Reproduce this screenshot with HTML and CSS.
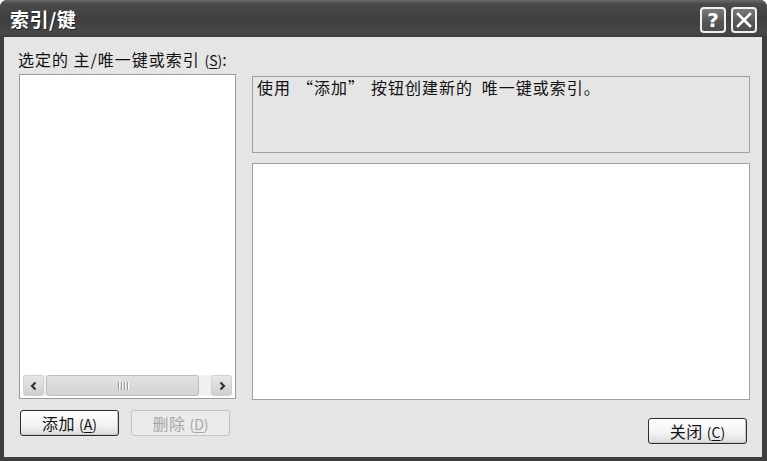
FILE: index.html
```html
<!DOCTYPE html>
<html lang="zh">
<head>
<meta charset="utf-8">
<link rel="stylesheet" href="styles.css">
</head>
<body>
<div class="window">
  <div class="titlebar">
    <div class="title">索引/键</div>
    <div class="tbtns">
      <div class="tbtn help">?</div>
      <div class="tbtn close">
        <svg width="16" height="16" viewBox="0 0 16 16"><path d="M2 2 L14 14 M14 2 L2 14" stroke="#fff" stroke-width="2.6" stroke-linecap="square"/></svg>
      </div>
    </div>
  </div>
  <div class="client">
    <div class="label">选定的 主/唯一键或索引 <span class="mn">(<u>S</u>)</span>:</div>
    <div class="main">
      <div class="leftcol">
        <div class="listbox">
          <div class="listarea"></div>
          <div class="hscroll">
            <div class="arrow"><svg width="10" height="10" viewBox="0 0 10 10"><path d="M6.5 1.5 L3 5 L6.5 8.5" fill="none" stroke="#333" stroke-width="2.2"/></svg></div>
            <div class="thumb"><div class="grip"><i></i><i></i><i></i><i></i></div></div>
            <div class="track"></div>
            <div class="arrow"><svg width="10" height="10" viewBox="0 0 10 10"><path d="M3.5 1.5 L7 5 L3.5 8.5" fill="none" stroke="#333" stroke-width="2.2"/></svg></div>
          </div>
        </div>
        <div class="btnrow">
          <div class="btn"><span>添加 <span class="mn">(<u>A</u>)</span></span></div>
          <div class="btn disabled"><span>删除 <span class="mn">(<u>D</u>)</span></span></div>
        </div>
      </div>
      <div class="rightcol">
        <div class="desc">使用<span class="ql">“</span>添加<span class="qr">”</span>按钮创建新的 唯一键或索引。</div>
        <div class="props"></div>
        <div class="btn closebtn"><span>关闭 <span class="mn">(<u>C</u>)</span></span></div>
      </div>
    </div>
  </div>
</div>
</body>
</html>
```
FILE: styles.css
```css
html, body {
  margin: 0;
  padding: 0;
  background: #ffffff;
}
body {
  width: 767px;
  height: 461px;
  overflow: hidden;
  font-family: "Noto Sans CJK SC", "DejaVu Sans", sans-serif;
}
.window {
  width: 767px;
  height: 461px;
  box-sizing: border-box;
  display: flex;
  flex-direction: column;
  background: #3e3e3e;
  border-radius: 7px 7px 0 0;
  overflow: hidden;
}
.titlebar {
  height: 37px;
  flex: none;
  display: flex;
  align-items: center;
  justify-content: space-between;
  padding: 0 10px 0 10px;
  background: linear-gradient(#6a6a6a 0px, #4a4a4a 4px, #3f3f3f 18px, #474747 34px, #3a3a3a 37px);
}
.title {
  color: #ffffff;
  font-weight: bold;
  font-size: 19px;
  line-height: 22px;
  text-shadow: 1px 1px 0 #222;
  letter-spacing: 0.5px;
}
.tbtns {
  display: flex;
  gap: 5px;
  margin-top: 3px;
}
.tbtn {
  width: 26px;
  height: 26px;
  box-sizing: border-box;
  border: 2px solid #f0f0f0;
  border-radius: 4px;
  background: linear-gradient(#7a7a7a, #555555 60%, #4d4d4d);
  display: flex;
  align-items: center;
  justify-content: center;
  color: #fff;
}
.help {
  font-family: "DejaVu Sans", sans-serif;
  font-weight: bold;
  font-size: 20px;
  line-height: 22px;
}
.client {
  flex: 1;
  margin: 0 5px 4px 4px;
  background: #e5e5e5;
  padding: 12px 0 0 14px;
  display: flex;
  flex-direction: column;
}
.label {
  font-size: 16px;
  line-height: 20px;
  letter-spacing: 1px;
  color: #111;
  height: 20px;
  margin-bottom: 5px;
}
.mn {
  font-size: 14px;
  letter-spacing: 0;
}
u {
  text-decoration: underline;
  text-underline-offset: 2px;
}
.main {
  display: flex;
  gap: 16px;
  margin-left: 1px;
}
.leftcol {
  width: 217px;
  display: flex;
  flex-direction: column;
}
.listbox {
  height: 325px;
  box-sizing: border-box;
  border: 1px solid #9a9a9a;
  background: #ffffff;
  display: flex;
  flex-direction: column;
  padding: 0 3px 2px 3px;
}
.listarea {
  flex: 1;
}
.hscroll {
  height: 21px;
  display: flex;
  align-items: stretch;
  gap: 2px;
  background: #f0f0f0;
  border-radius: 2px;
}
.arrow {
  width: 21px;
  box-sizing: border-box;
  border: 1px solid #d0d0d0;
  border-radius: 3px;
  background: linear-gradient(#e8e8e8, #cfcfcf);
  display: flex;
  align-items: center;
  justify-content: center;
}
.thumb {
  width: 153px;
  box-sizing: border-box;
  border: 1px solid #bdbdbd;
  border-radius: 3px;
  background: linear-gradient(#e2e2e2, #d3d3d3);
  display: flex;
  align-items: center;
  justify-content: center;
}
.grip {
  display: flex;
  gap: 2px;
}
.grip i {
  width: 1px;
  height: 8px;
  background: #9a9a9a;
  box-shadow: 1px 0 0 #fafafa;
}
.track {
  flex: 1;
}
.btnrow {
  display: flex;
  gap: 12px;
  margin-top: 11px;
  padding-left: 1px;
}
.btn {
  width: 99px;
  height: 26px;
  box-sizing: border-box;
  border: 1px solid #2e2e2e;
  border-radius: 3px;
  background: linear-gradient(#ffffff, #f2f2f2 60%, #dcdcdc);
  box-shadow: inset -1px -1px 0 #c8c8c8;
  display: flex;
  align-items: center;
  justify-content: center;
  font-size: 16px;
  line-height: 18px;
  letter-spacing: 0.5px;
  color: #111;
}
.btn.disabled {
  border-color: #c4c4c4;
  background: #ebebeb;
  box-shadow: none;
  color: #a6a6a6;
}
.rightcol {
  width: 498px;
  display: flex;
  flex-direction: column;
  padding-top: 2px;
}
.desc {
  height: 77px;
  box-sizing: border-box;
  border: 1px solid #a0a0a0;
  background: #e5e5e5;
  font-size: 16px;
  line-height: 20px;
  letter-spacing: 1px;
  word-spacing: 4px;
  color: #111;
  padding: 0 0 0 4px;
}
.ql {
  padding-left: 6px;
}
.qr {
  padding-right: 6px;
}
.props {
  margin-top: 10px;
  height: 237px;
  box-sizing: border-box;
  border: 1px solid #a0a0a0;
  background: #ffffff;
}
.closebtn {
  align-self: flex-end;
  margin-top: 18px;
  margin-right: 3px;
}
```
